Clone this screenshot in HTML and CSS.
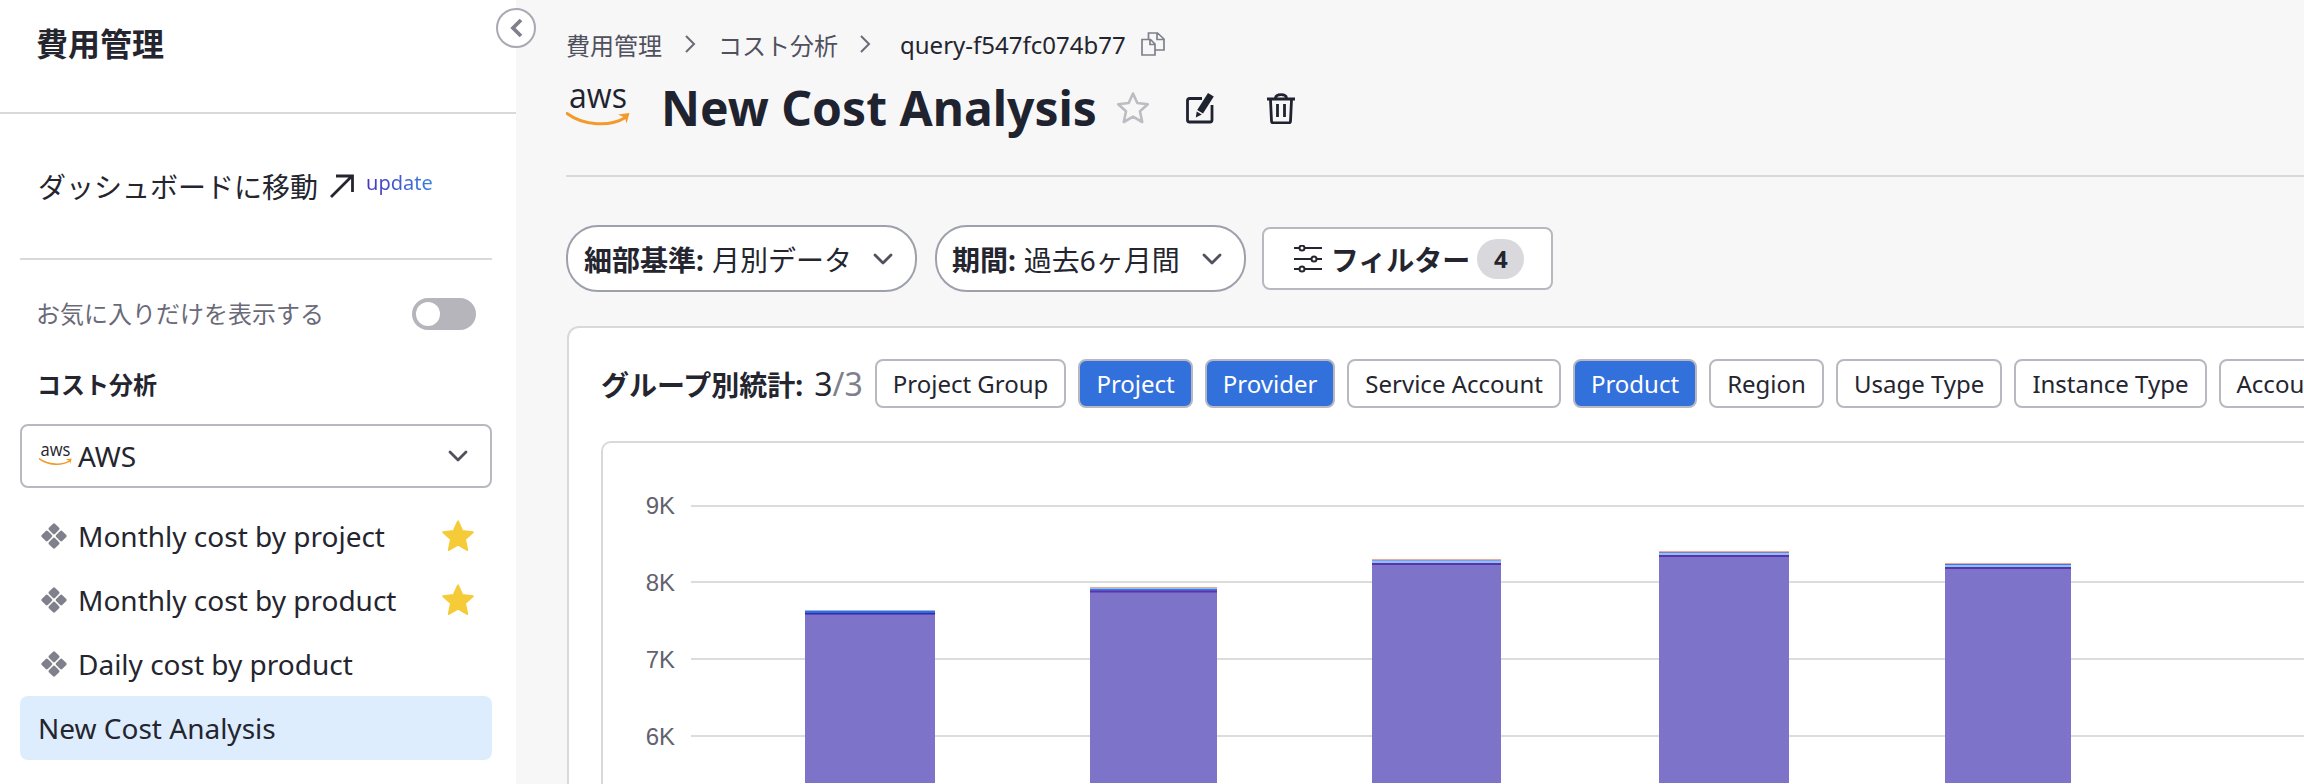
FILE: index.html
```html
<!DOCTYPE html>
<html lang="ja">
<head>
<meta charset="utf-8">
<title>New Cost Analysis</title>
<link rel="stylesheet" href="styles.css">
</head>
<body>
<svg class="defs" width="0" height="0" aria-hidden="true">
  <symbol id="smile" viewBox="0 0 64 16">
    <path d="M1 1.5C18 14 44 15 59.500 5.500" fill="none" stroke="#f39a2b" stroke-width="3" stroke-linecap="round"/>
    <path d="M52 2.500 63.500 1 60.500 11.500 59 5.800Z" fill="#f39a2b"/>
  </symbol>
  <symbol id="diamonds" viewBox="0 0 28 28">
    <g fill="#80808c">
      <rect x="9.700" y="2.500" width="8.600" height="8.600" rx="1.400" transform="rotate(45 14 6.800)"/>
      <rect x="9.700" y="16.900" width="8.600" height="8.600" rx="1.400" transform="rotate(45 14 21.200)"/>
      <rect x="2.500" y="9.700" width="8.600" height="8.600" rx="1.400" transform="rotate(45 6.800 14)"/>
      <rect x="16.900" y="9.700" width="8.600" height="8.600" rx="1.400" transform="rotate(45 21.200 14)"/>
    </g>
  </symbol>
  <symbol id="star" viewBox="0 0 32 32">
    <path d="M16 1.500 20.300 11 30.800 12.300 23 19.300 25.200 30 16 24.700 6.800 30 9 19.300 1.200 12.300 11.700 11Z" stroke-linejoin="round"/>
  </symbol>
  <symbol id="chev" viewBox="0 0 20 12">
    <path d="M2 2 10 10 18 2" fill="none" stroke="#50505e" stroke-width="2.800" stroke-linecap="round" stroke-linejoin="round"/>
  </symbol>
  <symbol id="crumb" viewBox="0 0 12 20">
    <path d="M2 2 10 10 2 18" fill="none" stroke="#6a6a78" stroke-width="2"/>
  </symbol>
</svg>

<div class="app">
  <aside class="sidebar">
    <div class="side-title">費用管理</div>
    <div class="side-link">
      <span>ダッシュボードに移動</span>
      <svg class="arrow" viewBox="0 0 26 26" width="26" height="26"><path d="M2 24 23.500 2.500M7 3H23.500V19" fill="none" stroke="#24252f" stroke-width="2.800"/></svg>
      <span class="update">update</span>
    </div>
    <div class="side-rule"></div>
    <div class="toggle-row">
      <span class="toggle-label">お気に入りだけを表示する</span>
      <span class="toggle"><span class="knob"></span></span>
    </div>
    <div class="side-heading">コスト分析</div>
    <div class="select">
      <svg class="aws-small" viewBox="0 0 64 40" width="33" height="22">
        <text x="3" y="20" class="aws-text" textLength="58" lengthAdjust="spacingAndGlyphs">aws</text>
        <use href="#smile" x="0" y="24" width="64" height="16"/>
      </svg>
      <span class="select-label">AWS</span>
      <svg class="chev" width="20" height="12"><use href="#chev"/></svg>
    </div>
    <ul class="menu">
      <li class="menu-item">
        <svg class="dia" width="28" height="28"><use href="#diamonds"/></svg>
        <span class="menu-text">Monthly cost by project</span>
        <svg class="fav" width="32" height="32"><use href="#star"/></svg>
      </li>
      <li class="menu-item">
        <svg class="dia" width="28" height="28"><use href="#diamonds"/></svg>
        <span class="menu-text">Monthly cost by product</span>
        <svg class="fav" width="32" height="32"><use href="#star"/></svg>
      </li>
      <li class="menu-item">
        <svg class="dia" width="28" height="28"><use href="#diamonds"/></svg>
        <span class="menu-text">Daily cost by product</span>
      </li>
      <li class="menu-item active"><span class="menu-text">New Cost Analysis</span></li>
    </ul>
  </aside>

  <button class="collapse" aria-label="collapse">
    <svg width="16" height="22" viewBox="0 0 16 22"><path d="M13 3 5 11 13 19" fill="none" stroke="#80808c" stroke-width="3.800"/></svg>
  </button>

  <main class="main">
    <nav class="crumbs">
      <span>費用管理</span>
      <svg class="crumb-sep sep-one" width="12" height="20"><use href="#crumb"/></svg>
      <span>コスト分析</span>
      <svg class="crumb-sep sep-two" width="12" height="20"><use href="#crumb"/></svg>
      <span class="crumb-id">query-f547fc074b77</span>
      <svg class="copy" viewBox="0 0 24 24" width="24" height="24"><path d="M1 7.500H9.500L14 12V23H1ZM9 8V12.500H14M7.500 7V1H16.500L23 7V18H14.500M16 1.500V7.500H23" fill="none" stroke="#80808c" stroke-width="1.700"/></svg>
    </nav>
    <div class="title-row">
      <svg class="aws-big" viewBox="0 0 64 40" width="64" height="40">
        <text x="3" y="20" class="aws-text" textLength="58" lengthAdjust="spacingAndGlyphs">aws</text>
        <use href="#smile" x="0" y="24" width="64" height="16"/>
      </svg>
      <h1 class="title">New Cost Analysis</h1>
      <svg class="star-line" width="32" height="32"><use href="#star"/></svg>
      <svg class="edit" viewBox="0 0 28 32" width="28" height="32">
        <path d="M16 6.500H3.500A2 2 0 0 0 1.500 8.500V28A2 2 0 0 0 3.500 30H24A2 2 0 0 0 26 28V13" fill="none" stroke="#1f2330" stroke-width="2.800"/>
        <path d="M22 1 27.800 4.500 17 21.500 11.200 18ZM10.700 19.500 15.800 22.500 9.800 25.500Z" fill="#1f2330"/>
      </svg>
      <svg class="trash" viewBox="0 0 28 32" width="28" height="32">
        <path d="M3.500 8 4.500 29A2 2 0 0 0 6.500 31H21.500A2 2 0 0 0 23.500 29L24.500 8M0 7H28M8.500 6C9 1.500 19 1.500 19.500 6M10.500 12V25M17.500 12V25" fill="none" stroke="#1f2330" stroke-width="2.800"/>
      </svg>
    </div>
    <div class="main-rule"></div>
    <div class="filters">
      <div class="pill pill-a"><b>細部基準:</b><span>月別データ</span><svg class="chev" width="20" height="12"><use href="#chev"/></svg></div>
      <div class="pill pill-b"><b>期間:</b><span>過去6ヶ月間</span><svg class="chev" width="20" height="12"><use href="#chev"/></svg></div>
      <div class="filter-btn">
        <svg viewBox="0 0 28 28" width="28" height="28"><path d="M0 3H28M0 14H28M0 24H28" stroke="#24252f" stroke-width="2" fill="none"/><g fill="#fff" stroke="#24252f" stroke-width="2"><circle cx="8" cy="3" r="2.500"/><circle cx="20" cy="14" r="2.500"/><circle cx="8" cy="24" r="2.500"/></g></svg>
        <b>フィルター</b>
        <span class="badge">4</span>
      </div>
    </div>
    <section class="card">
      <div class="group-row">
        <b class="group-label">グループ別統計:</b>
        <span class="count">3<em>/3</em></span>
        <span class="chip">Project Group</span>
        <span class="chip on">Project</span>
        <span class="chip on">Provider</span>
        <span class="chip">Service Account</span>
        <span class="chip on">Product</span>
        <span class="chip">Region</span>
        <span class="chip">Usage Type</span>
        <span class="chip">Instance Type</span>
        <span class="chip">Account</span>
      </div>
      <div class="chart">
        <svg class="plot" viewBox="603 444 1701 340" width="1701" height="340">
          <g class="grid">
            <rect x="691" y="506" width="1613" height="2"/>
            <rect x="691" y="582" width="1613" height="2"/>
            <rect x="691" y="659" width="1613" height="2"/>
            <rect x="691" y="736" width="1613" height="2"/>
          </g>
          <g class="ticks">
            <text x="675" y="515">9K</text>
            <text x="675" y="592">8K</text>
            <text x="675" y="669">7K</text>
            <text x="675" y="746">6K</text>
          </g>
          <g>
            <rect x="805" y="611" width="130" height="173" fill="#7d73c9"/>
            <rect x="805" y="611" width="130" height="1" fill="#9fb4e6"/>
            <rect x="805" y="612" width="130" height="2" fill="#2f6fdc"/>
            <rect x="805" y="614" width="130" height="1.500" fill="#3a26a8"/>

            <rect x="1090" y="588" width="127" height="196" fill="#7d73c9"/>
            <rect x="1090" y="588" width="127" height="1" fill="#f0a58c"/>
            <rect x="1090" y="589" width="127" height="1" fill="#8fc0f5"/>
            <rect x="1090" y="590" width="127" height="1.500" fill="#3f78dc"/>
            <rect x="1090" y="591.500" width="127" height="2" fill="#5b34ad"/>

            <rect x="1372" y="560" width="129" height="224" fill="#7d73c9"/>
            <rect x="1372" y="560" width="129" height="1" fill="#eeaa98"/>
            <rect x="1372" y="561" width="129" height="1" fill="#7fa0e0"/>
            <rect x="1372" y="562" width="129" height="2" fill="#8fc0f5"/>
            <rect x="1372" y="564" width="129" height="2" fill="#5b34ad"/>

            <rect x="1659" y="552" width="130" height="232" fill="#7d73c9"/>
            <rect x="1659" y="552" width="130" height="1.500" fill="#eeaa98"/>
            <rect x="1659" y="553.500" width="130" height=".5" fill="#3f78dc"/>
            <rect x="1659" y="554" width="130" height="2" fill="#8fc0f5"/>
            <rect x="1659" y="556" width="130" height="2" fill="#5b34ad"/>

            <rect x="1945" y="564" width="126" height="220" fill="#7d73c9"/>
            <rect x="1945" y="564" width="126" height="1" fill="#eeaa98"/>
            <rect x="1945" y="565" width="126" height="1" fill="#3f78dc"/>
            <rect x="1945" y="566" width="126" height="2" fill="#8fc0f5"/>
            <rect x="1945" y="568" width="126" height="2" fill="#5b34ad"/>
          </g>
        </svg>
      </div>
    </section>
  </main>
</div>
</body>
</html>
```
FILE: styles.css
```css
* { box-sizing: border-box; }
html, body { margin: 0; height: 100%; overflow: hidden; }
body {
  font-family: "Noto Sans", "Noto Sans CJK JP", sans-serif;
  color: #24252f;
  background: #f7f7f7;
}
.defs { position: absolute; }
.app { display: flex; height: 784px; position: relative; overflow: hidden; }

/* Sidebar */
.sidebar { flex: 0 0 516px; background: #fff; display: flex; flex-direction: column; }
.side-title {
  height: 114px;
  padding: 24px 0 0 36px;
  font-size: 32px;
  line-height: 40px;
  font-weight: 700;
  border-bottom: 2px solid #d9d9d9;
}
.side-link {
  height: 144px;
  display: flex;
  align-items: center;
  padding-left: 38px;
  font-size: 28px;
}
.arrow { margin-left: 11px; }
.update {
  margin: -8px 0 0 11px;
  font-size: 20px;
  background: linear-gradient(90deg, #4b35b8, #3a80e6);
  -webkit-background-clip: text;
  background-clip: text;
  color: transparent;
}
.side-rule { height: 2px; margin: 0 24px 0 20px; background: #d9d9d9; }
.toggle-row {
  margin-top: 34px;
  height: 40px;
  padding: 0 40px 0 36px;
  display: flex;
  align-items: center;
  justify-content: space-between;
  font-size: 24px;
  color: #6a6a78;
}
.toggle-label { margin-top: -3px; }
.toggle { width: 64px; height: 32px; border-radius: 16px; background: #b5b5bb; padding: 4px; }
.knob { display: block; width: 24px; height: 24px; border-radius: 50%; background: #fff; }
.side-heading { margin-top: 31px; height: 39px; line-height: 40px; padding-left: 37px; font-size: 24px; font-weight: 700; }
.select {
  margin: 20px 24px 0 20px;
  height: 64px;
  border: 2px solid #b8b8c0;
  border-radius: 8px;
  display: flex;
  align-items: center;
  padding: 0 22px 0 17px;
}
.select-label { font-size: 28px; margin-left: 6px; flex: 1; }
.menu { list-style: none; margin: 16px 24px 0 20px; padding: 0; }
.menu-item { height: 64px; display: flex; align-items: center; padding: 0 18px 0 20px; font-size: 28px; border-radius: 8px; }
.menu-item.active { background: #ddedfd; padding-left: 18px; }
.menu-text { flex: 1; }
.dia { margin-right: 10px; }
.fav { fill: #f5cb38; stroke: #f5cb38; stroke-width: 2; }

/* Collapse */
.collapse {
  position: absolute;
  left: 496px;
  top: 8px;
  width: 40px;
  height: 40px;
  border-radius: 50%;
  border: 2px solid #a9a9b3;
  background: #fff;
  padding: 0;
  display: flex;
  align-items: center;
  justify-content: center;
}

/* Main */
.main { flex: 1; min-width: 0; padding: 24px 0 0 50px; overflow: hidden; }
.crumbs { height: 40px; display: flex; align-items: center; font-size: 24px; color: #50505e; }
.crumb-sep { flex: none; }
.sep-one { margin: 0 22px 0 22px; }
.sep-two { margin: 0 29px 0 21px; }
.crumb-id { color: #24252f; }
.copy { margin-left: 15px; }
.title-row { margin-top: 12px; height: 64px; display: flex; align-items: center; }
.aws-text { font-family: "Open Sans", sans-serif; font-size: 34px; fill: #1f2330; }
.aws-big { flex: none; }
.title { margin: 0 0 0 31px; font-size: 48px; line-height: 64px; font-weight: 700; color: #1f2330; }
.star-line { margin-left: 20px; fill: none; stroke: #bcbcc2; stroke-width: 2.600; }
.edit { margin-left: 37px; }
.trash { margin-left: 53px; }
.main-rule { margin-top: 35px; height: 2px; background: #d9d9d9; }
.filters { margin-top: 48px; display: flex; align-items: center; font-size: 28px; }
.pill {
  height: 67px;
  border: 2px solid #9ea0ab;
  border-radius: 32px;
  background: #fff;
  display: flex;
  align-items: center;
  padding: 0 22px 0 16px;
}
.pill b { margin-right: 8px; }
.pill .chev { margin-left: 21px; }
.pill-b { margin-left: 18px; padding-left: 15px; }
.pill-b .chev { margin-left: 22px; }
.filter-btn {
  height: 63px;
  border: 2px solid #b8b8c0;
  border-radius: 8px;
  background: #fff;
  display: flex;
  align-items: center;
  padding: 0 27px 0 30px;
  margin-left: 16px;
}
.filter-btn b { margin-left: 9px; }
.badge {
  margin-left: 7px;
  width: 47px;
  height: 40px;
  border-radius: 20px;
  background: #d9d9dd;
  font-size: 24px;
  font-weight: 700;
  display: flex;
  align-items: center;
  justify-content: center;
}
.card {
  margin: 34px -40px 0 1px;
  height: 600px;
  background: #fff;
  border: 2px solid #d9d9d9;
  border-radius: 12px;
  padding: 31px 32px 0;
}
.group-row { height: 49px; display: flex; align-items: center; gap: 12px; white-space: nowrap; }
.group-label { font-size: 28px; }
.count { font-size: 32px; margin: 0 0 0 -1px; }
.count em { font-style: normal; color: #80808c; }
.chip {
  height: 49px;
  border: 2px solid #b8b8c0;
  border-radius: 8px;
  background: #fff;
  font-size: 24px;
  display: flex;
  align-items: center;
  padding: 0 16px;
  flex: none;
}
.chip.on { background: #3270dc; color: #fff; }
.chart {
  margin-top: 33px;
  width: 1800px;
  height: 500px;
  border: 2px solid #d9d9d9;
  border-radius: 10px;
  background: #fff;
  overflow: hidden;
}
.plot { display: block; }
.grid rect { fill: #dcdcdc; }
.ticks text { font-family: "Liberation Sans", sans-serif; font-size: 24px; fill: #62626e; text-anchor: end; }
```
